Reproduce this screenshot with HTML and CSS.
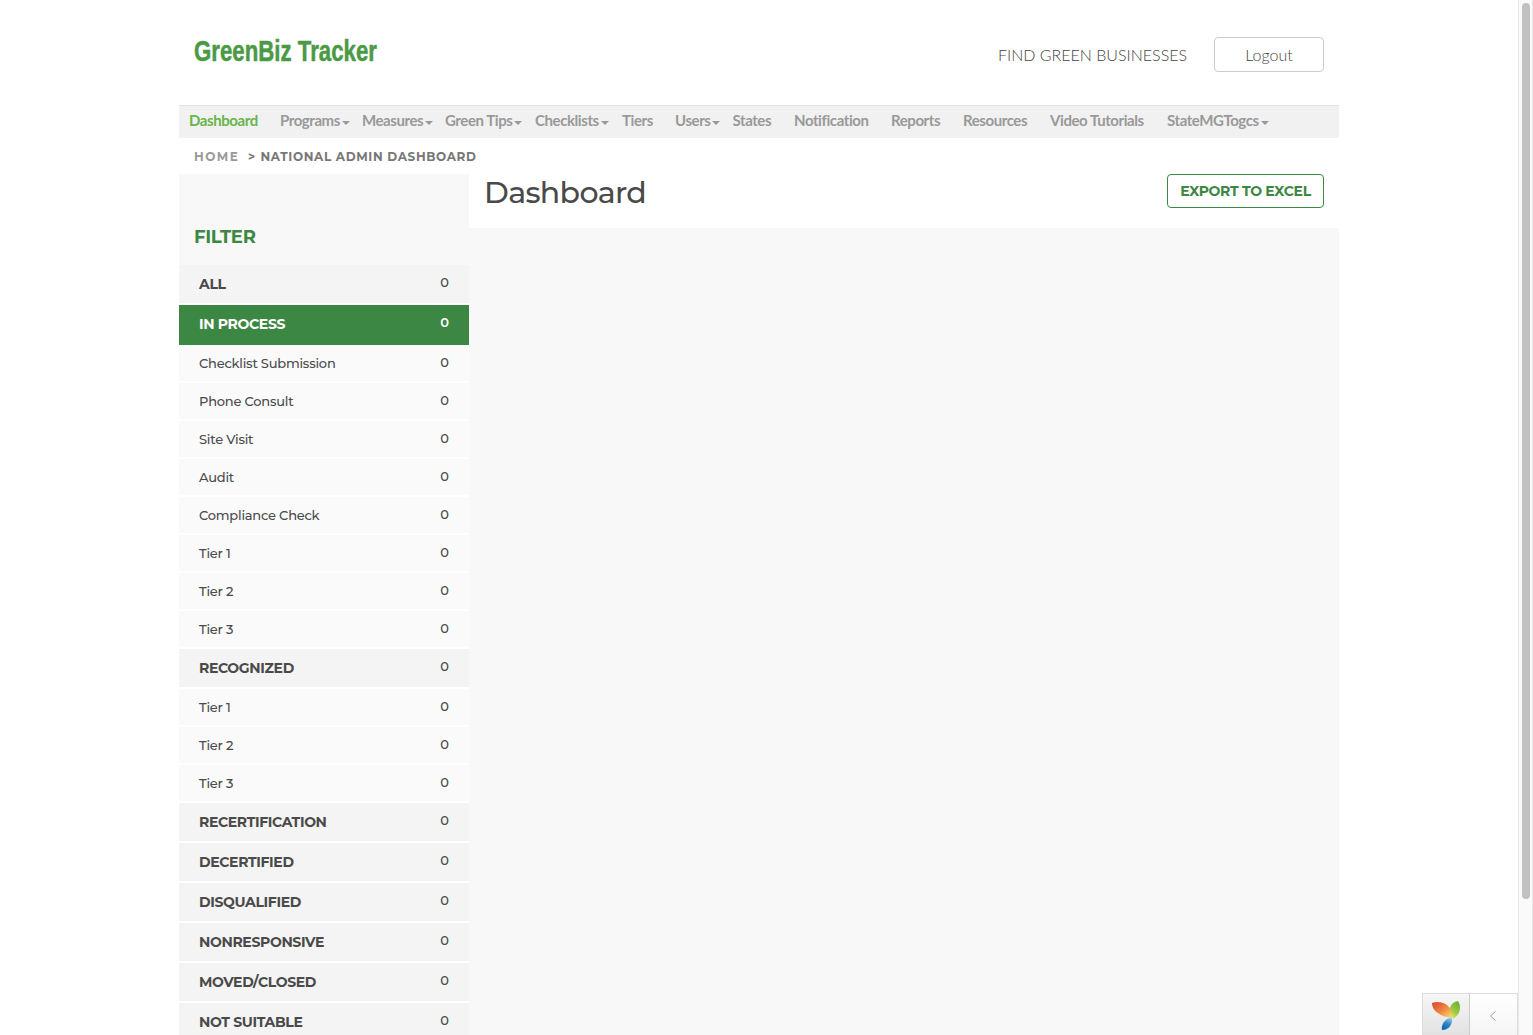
FILE: index.html
```html
<!DOCTYPE html>
<html lang="en">
<head>
<meta charset="utf-8">
<title>GreenBiz Tracker</title>
<link rel="stylesheet" href="styles.css">
</head>
<body>
<div class="page">
  <header class="header">
    <svg class="logo" width="240" height="50" role="img" aria-label="GreenBiz Tracker"><text class="logo-text" x="0" y="32" textLength="183" lengthAdjust="spacingAndGlyphs">GreenBiz Tracker</text></svg>
    <div class="header-actions"><a class="find">FIND GREEN BUSINESSES</a><a class="logout">Logout</a></div>
  </header>
  <nav class="nav">
    <a class="active">Dashboard</a><a class="drop">Programs</a><a class="drop">Measures</a><a class="drop">Green Tips</a><a class="drop">Checklists</a><a>Tiers</a><a class="drop">Users</a><a>States</a><a>Notification</a><a>Reports</a><a>Resources</a><a>Video Tutorials</a><a class="drop">StateMGTogcs</a>
  </nav>
  <div class="breadcrumb"><span class="home">HOME</span><span class="sep">&gt;</span><span class="current">NATIONAL ADMIN DASHBOARD</span></div>
  <div class="columns">
    <aside class="sidebar">
      <h2 class="filter">FILTER</h2>
      <div class="row group"><span>ALL</span><b>0</b></div>
      <div class="row group selected"><span>IN PROCESS</span><b>0</b></div>
      <div class="row"><span>Checklist Submission</span><b>0</b></div>
      <div class="row"><span>Phone Consult</span><b>0</b></div>
      <div class="row"><span>Site Visit</span><b>0</b></div>
      <div class="row"><span>Audit</span><b>0</b></div>
      <div class="row"><span>Compliance Check</span><b>0</b></div>
      <div class="row"><span>Tier 1</span><b>0</b></div>
      <div class="row"><span>Tier 2</span><b>0</b></div>
      <div class="row"><span>Tier 3</span><b>0</b></div>
      <div class="row group"><span>RECOGNIZED</span><b>0</b></div>
      <div class="row"><span>Tier 1</span><b>0</b></div>
      <div class="row"><span>Tier 2</span><b>0</b></div>
      <div class="row"><span>Tier 3</span><b>0</b></div>
      <div class="row group"><span>RECERTIFICATION</span><b>0</b></div>
      <div class="row group"><span>DECERTIFIED</span><b>0</b></div>
      <div class="row group"><span>DISQUALIFIED</span><b>0</b></div>
      <div class="row group"><span>NONRESPONSIVE</span><b>0</b></div>
      <div class="row group"><span>MOVED/CLOSED</span><b>0</b></div>
      <div class="row group"><span>NOT SUITABLE</span><b>0</b></div>
    </aside>
    <main class="main">
      <div class="title-bar"><h1>Dashboard</h1><a class="export">EXPORT TO EXCEL</a></div>
      <div class="panel"></div>
    </main>
  </div>
</div>
<div class="debug">
  <div class="debug-logo"><svg width="30" height="32" viewBox="0 0 30 32">
    <defs>
      <linearGradient id="r" x1="0" y1="0" x2="1" y2="1"><stop offset="0" stop-color="#d9412b"/><stop offset=".5" stop-color="#ee8540"/><stop offset="1" stop-color="#fde27a"/></linearGradient>
      <linearGradient id="g" x1=".7" y1="0" x2=".2" y2="1"><stop offset="0" stop-color="#66b13a"/><stop offset=".6" stop-color="#a4cb3f"/><stop offset="1" stop-color="#f0e66b"/></linearGradient>
      <linearGradient id="b" x1=".7" y1="0" x2=".3" y2="1"><stop offset="0" stop-color="#9bd0ee"/><stop offset=".5" stop-color="#2d86c8"/><stop offset="1" stop-color="#0868b3"/></linearGradient>
    </defs>
    <path fill="url(#r)" d="M0 3C5 1 13 2 17 7c3 3 4 7 4 11-5-1-8-1-12-3C3 12 0 8 0 3z"/>
    <path fill="url(#g)" d="M26 1c4 6 2 14-5 18-1-3-3-6-3-10 0-4 3-7 8-8z"/>
    <path fill="url(#b)" d="M20 17c1 6-2 13-10 13-1-5 2-11 10-13z"/>
  </svg></div>
  <div class="debug-toggle"><svg width="8" height="12" viewBox="0 0 8 12"><path d="M6.500 1.500 1.500 6l5 4.500" fill="none" stroke="#999"/></svg></div>
</div>
<div class="scroll-track"><div class="scroll-thumb"></div></div>
</body>
</html>
```
FILE: styles.css
```css
* { box-sizing: border-box; }
html, body { height: 100%; overflow: hidden; }
body { margin: 0; background: #fff; color: #4a4a4a; font: 13px Montserrat, Inter, sans-serif; }
.page { width: 1160px; margin-left: 179px; }
.header { height: 105px; display: flex; justify-content: space-between; align-items: flex-start; padding: 29px 15px 0; }
.logo { overflow: visible; }
.logo-text { font: bold 30px "Liberation Sans Narrow", "Liberation Sans", sans-serif; fill: #4a9a45; stroke: #4a9a45; stroke-width: .5px; }
.header-actions { display: flex; align-items: center; gap: 27px; margin-top: 8px; font: 300 16px Lato, sans-serif; color: #444; }
.find { width: 189px; white-space: nowrap; }
.logout { width: 110px; height: 35px; line-height: 34px; border: 1px solid #ccc; border-radius: 4px; text-align: center; }
.nav { height: 33px; background: #f1f1f1; border-top: 1px solid #e1e1e1; padding-left: 10px; display: grid; grid-template-columns: 91px 82px 83px 90px 87px 53px 57.500px 61.500px 97px 72px 87px 117px 110px; font: bold 15px/29px Lato, sans-serif; letter-spacing: -.420px; color: #999; white-space: nowrap; }
.active { color: #67b54b; }
.drop::after { content: ""; display: inline-block; margin-left: 2px; border: 4px solid transparent; border-top-color: #999; border-bottom: 0; vertical-align: 1px; }
.breadcrumb { height: 36px; padding-left: 15px; display: flex; font-size: 12px; line-height: 37px; font-weight: 700; letter-spacing: .650px; color: #777; white-space: nowrap; }
.home { color: #999; width: 54px; letter-spacing: 1.500px; }
.sep { width: 12.500px; }
.columns { display: flex; height: 861px; }
.sidebar { width: 290px; background: #f8f8f8; }
.filter { margin: 0; height: 91px; padding: 51px 15px 0; font-size: 18px; line-height: 24px; letter-spacing: -.3px; color: #3d8744; }
.row { height: 38px; display: flex; justify-content: space-between; padding: 0 20px; font-weight: 500; letter-spacing: -.220px; line-height: 37px; background: #fafafa; border-bottom: 2px solid #fff; }
.row b { font-weight: 500; letter-spacing: 0; line-height: 35px; }
.group { height: 40px; background: #f4f4f4; font-weight: 700; font-size: 14px; letter-spacing: -.340px; line-height: 38px; }
.group b { font-size: 13px; }
.selected { background: #3d8744; border-color: #3d8744; color: #fff; }
.selected b { font-weight: 600; }
.main { flex: 1; display: flex; flex-direction: column; }
.title-bar { height: 54px; padding: 0 15px; display: flex; justify-content: space-between; }
h1 { margin: 0; font-size: 30px; line-height: 37px; font-weight: 500; letter-spacing: -.650px; }
.export { width: 157px; height: 34px; border: 1px solid #3d8744; border-radius: 4px; text-align: center; color: #3d8744; font-weight: 700; font-size: 14px; letter-spacing: -.3px; line-height: 33px; }
.panel { flex: 1; background: #f8f8f8; }
.debug { position: fixed; right: 15px; bottom: 0; width: 96px; height: 42px; display: flex; border: 1px solid #ddd; border-width: 1px 1px 0; background: linear-gradient(#fff, #f5f5f5); }
.debug-logo { width: 47px; padding: 6px 0 0 9px; border-right: 1px solid #ccc; background: linear-gradient(#f6f6f6, #e2e2e2); }
.debug-toggle { flex: 1; padding: 15px 0 0 19px; }
.scroll-track { position: fixed; top: 0; right: 0; width: 15px; height: 100%; background: #fafafa; border: 1px solid #e8e8e8; border-width: 0 1px; padding: 3px 2px 0 3px; }
.scroll-thumb { width: 8px; height: 896px; border-radius: 4px; background: #c1c1c1; }
```
